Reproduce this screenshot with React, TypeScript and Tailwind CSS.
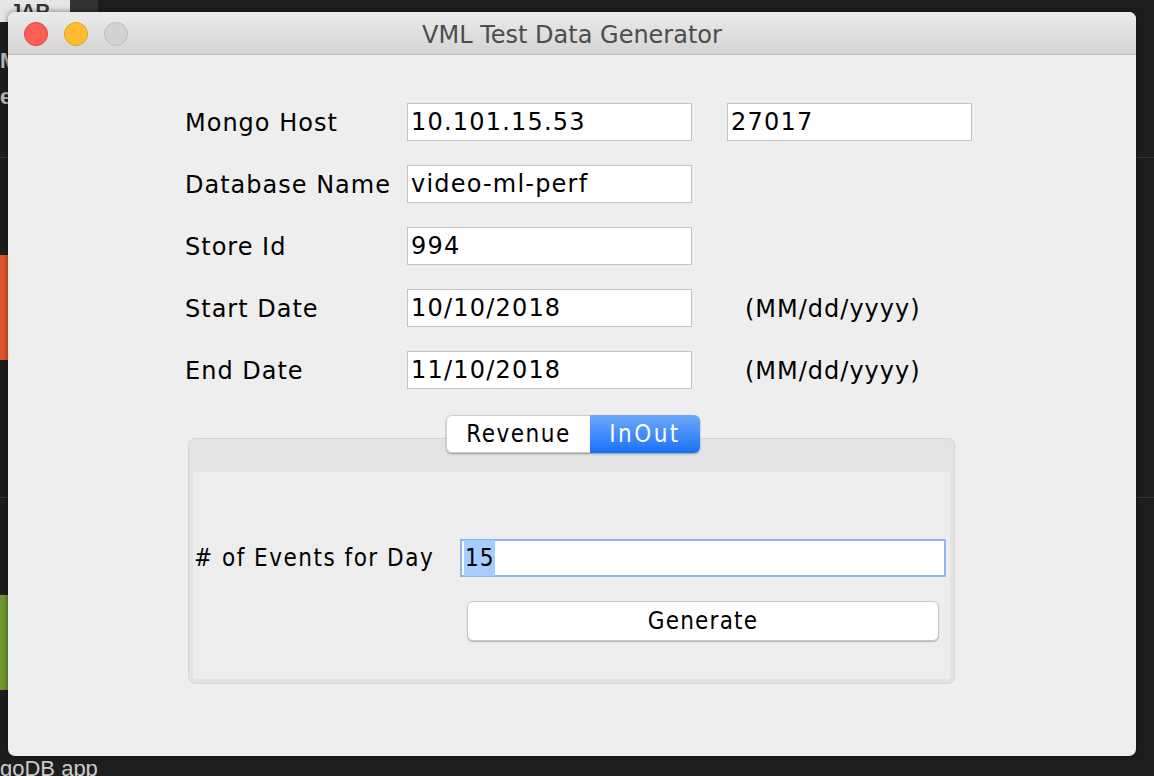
import React from "react";

const ui = { fontFamily: '"DejaVu Sans", "Noto Sans", sans-serif' };
const narrow = { fontFamily: '"DejaVu Sans Condensed", "Liberation Sans", "Noto Sans", sans-serif' };
const plain = { fontFamily: '"Liberation Sans", "Noto Sans", sans-serif' };

function Field({ value, width = "w-[285px]" }: { value: string; width?: string }) {
  return (
    <div className={`${width} h-[38px] bg-white border border-[#c3c3c3] flex items-center pl-[3px] text-[24px] tracking-[1.2px] text-black`}>
      {value}
    </div>
  );
}

function Row({ label, value, extra }: { label: string; value: string; extra?: React.ReactNode }) {
  return (
    <div className="flex items-center h-[38px]">
      <div className="w-[222px] text-[24px] tracking-[1px] text-black pt-[2px]">{label}</div>
      <Field value={value} />
      {extra}
    </div>
  );
}

function Desktop() {
  return (
    <>
      <div className="absolute left-0 top-0 w-[70px] h-[22px] bg-[#e6e6e6] text-[#333] text-[20px] font-bold leading-[22px] pl-[10px] overflow-hidden" style={plain}>
        JAR
      </div>
      <div className="absolute left-[70px] top-0 w-[28px] h-[12px] bg-[#333]" />
      <div className="absolute left-0 top-[157px] w-full h-px bg-[#333]" />
      <div className="absolute left-0 top-[497px] w-full h-px bg-[#333]" />
      <div className="absolute left-0 top-[255px] w-[8px] h-[105px] bg-[#e0582e]" />
      <div className="absolute left-0 top-[595px] w-[8px] h-[95px] bg-[#6f9a2e]" />
      <div className="absolute left-0 top-[50px] w-[8px] overflow-hidden text-[#bbb] text-[22px] font-bold leading-none" style={plain}>M</div>
      <div className="absolute left-0 top-[86px] w-[8px] overflow-hidden text-[#bbb] text-[22px] font-bold leading-none" style={plain}>e</div>
      <div className="absolute left-0 top-[758px] text-[#ccc] text-[22px] leading-none" style={plain}>goDB app</div>
    </>
  );
}

export default function App() {
  return (
    <div className="relative w-[1154px] h-[776px] bg-[#1e1e1e] overflow-hidden" style={ui}>
      <Desktop />
      <div className="absolute left-[8px] top-[12px] w-[1128px] h-[744px] bg-[#eeeeee] rounded-[7px] overflow-hidden flex flex-col shadow-[0_0_6px_rgba(0,0,0,0.5)]">
        <div className="relative h-[43px] shrink-0 bg-gradient-to-b from-[#ebebeb] to-[#d4d4d4] border-b border-[#bdbdbd] flex items-center justify-center">
          <div className="absolute left-[16px] top-[10px] flex gap-[16px]">
            <div className="w-[24px] h-[24px] rounded-full bg-[#fd5f57] border border-[#e0443e]" />
            <div className="w-[24px] h-[24px] rounded-full bg-[#febc2e] border border-[#dea123]" />
            <div className="w-[24px] h-[24px] rounded-full bg-[#d2d2d2] border border-[#bfbfbf]" />
          </div>
          <div className="text-[24px] text-[#4d4d4d] pt-[4px]">VML Test Data Generator</div>
        </div>

        <div className="flex flex-col pl-[177px] pt-[48px] gap-[24px]">
          <Row
            label="Mongo Host"
            value="10.101.15.53"
            extra={<div className="ml-[35px]"><Field value="27017" width="w-[245px]" /></div>}
          />
          <Row label="Database Name" value="video-ml-perf" />
          <Row label="Store Id" value="994" />
          <Row
            label="Start Date"
            value="10/10/2018"
            extra={<div className="ml-[53px] text-[24px] tracking-[1px] text-black pt-[2px]">(MM/dd/yyyy)</div>}
          />
          <Row
            label="End Date"
            value="11/10/2018"
            extra={<div className="ml-[53px] text-[24px] tracking-[1px] text-black pt-[2px]">(MM/dd/yyyy)</div>}
          />
        </div>

        <div className="relative ml-[180px] mt-[49px] w-[767px]">
          <div className="absolute left-[258px] top-[-23px] z-10 flex h-[38px] rounded-[6px] shadow-[0_1px_2px_rgba(0,0,0,0.35)] overflow-hidden text-[24px] tracking-[1.5px]" style={narrow}>
            <div className="w-[144px] bg-white border border-[#cfcfcf] rounded-l-[6px] border-r-0 flex items-center justify-center text-black">Revenue</div>
            <div className="w-[110px] bg-gradient-to-b from-[#6aa8fb] to-[#1670f7] flex items-center justify-center text-white tracking-[2.5px]">InOut</div>
          </div>
          <div className="h-[246px] rounded-[7px] border border-[#d6d6d6] bg-[#e3e3e3] pt-[33px] px-[4px] pb-[4px]">
            <div className="h-full bg-[#ededed] flex flex-col pt-[67px]">
              <div className="flex items-center h-[38px]">
                <div className="w-[267px] pl-[1px] text-[24px] tracking-[1.5px] text-black" style={narrow}># of Events for Day</div>
                <div className="w-[486px] h-[38px] bg-white border-2 border-[#8fb6f0] flex items-center pl-[2px] text-[24px] text-black" style={narrow}>
                  <span className="bg-[#a6cdff] px-[1px] tracking-[1px]">15</span>
                </div>
              </div>
              <div className="ml-[274px] mt-[24px] w-[472px] h-[40px] bg-white rounded-[6px] border border-[#c8c8c8] shadow-[0_1px_1px_rgba(0,0,0,0.25)] flex items-center justify-center text-[24px] tracking-[1.2px] text-black" style={narrow}>
                Generate
              </div>
            </div>
          </div>
        </div>
      </div>
    </div>
  );
}
